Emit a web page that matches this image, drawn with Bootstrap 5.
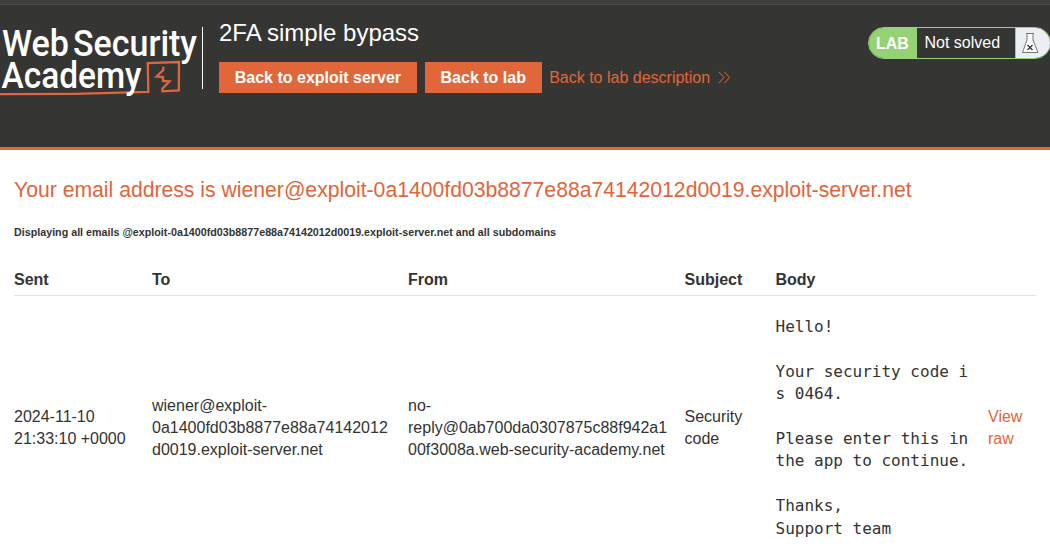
<!DOCTYPE html>
<html lang="en">
<head>
<meta charset="utf-8">
<title>2FA simple bypass</title>
<link rel="stylesheet" href="https://cdn.jsdelivr.net/npm/bootstrap@5.3.0/dist/css/bootstrap.min.css">
<style>
body{font-family:"Liberation Sans",Arial,sans-serif;font-size:16px;line-height:22px;color:#333332;overflow:hidden}
a{color:#e0673a;text-decoration:none}
.topstrip{height:5px;background:#3f3f3f;border-bottom:1px solid #4d4d4c}
.lab-header{height:145px;background:#353533;border-bottom:3px solid #e1653a}
.brand-logo{width:202px;height:90px;margin-top:14px;overflow:visible}
.brand-logo text{font-family:Roboto,sans-serif;font-weight:500;font-size:37.5px;fill:#fff}
.divider{width:1px;height:62px;margin-top:22px;background:#fff}
.title-block{margin:12px 0 0 16px}
.title-block h2{font-size:24px;line-height:32px;margin-bottom:13px;color:#fff;font-weight:400}
.btn-lab{height:31px;padding:0 15.75px;border:0;border-radius:0;background:#e1673a;color:#fff;font-weight:700;line-height:31px}
.btn-lab:hover{background:#c9552b;color:#fff}
.lab-link{margin-left:-.5px}
.lab-status{width:183px;height:32px;margin:22px -1px 0 0;border:1px solid #95d175;border-radius:16px;color:#fff;line-height:30px}
.lab-label{width:48px;background:#95d175;font-weight:700;padding:1px 0 0 7px}
.lab-text{width:99px;padding-left:7.5px;border-right:1px solid #95d175}
.lab-flask{background:#ebeef2}
.mail-area{padding:0 14px}
.mail-area h1{font-size:21.18px;line-height:26px;margin:27px 0 0;color:#e1653a;font-weight:400}
.mail-area h6{font-size:10.72px;line-height:14px;margin:22px 0 30px;font-weight:700}
.mail-table{table-layout:fixed;width:1022px;margin:0;color:#333332;--bs-table-color:#333332;--bs-table-bg:transparent}
.mail-table>:not(caption)>*>*{padding:0 20px 0 0;border:0}
.mail-table thead th{height:26px;border-bottom:1px solid #e2e2e2!important;vertical-align:top}
.mail-body{padding:20.5px 0}
.mail-table pre{font:16px/22.4px "DejaVu Sans Mono",monospace;margin:0;color:#333332;white-space:pre-wrap;word-break:break-all;width:193px}
</style>
</head>
<body>
<div class="topstrip"></div>
<header class="lab-header d-flex align-items-start">
  <svg class="brand-logo flex-shrink-0" viewBox="0 19 202 90">
    <text x="2" y="55.5" textLength="67" lengthAdjust="spacingAndGlyphs">Web</text>
    <text x="73" y="55.5" textLength="124" lengthAdjust="spacingAndGlyphs">Security</text>
    <path d="M0 94.2L75 93.8L148.3 92L147.8 63L179 62L178.8 90.5L162.5 91.3V88.5L169.5 81.500L163 81V77L156.5 76.5L163.3 70V66.5" fill="none" stroke="#e1653a" stroke-width="2.3"/>
    <text x="1.5" y="88" textLength="140" lengthAdjust="spacingAndGlyphs">Academy</text>
  </svg>
  <div class="divider"></div>
  <div class="title-block flex-grow-1">
    <h2>2FA simple bypass</h2>
    <div class="d-flex align-items-center gap-2">
      <a class="btn btn-lab" href="#">Back to exploit server</a>
      <a class="btn btn-lab" href="#">Back to lab</a>
      <a class="lab-link d-flex align-items-center" href="#">Back to lab description
        <svg class="ms-2" width="13" height="13" viewBox="0 0 13 13" fill="none" stroke="currentColor" stroke-width="1"><path d="M.8.8L6 6.5L.8 12.2M6.3.8L11.5 6.5L6.3 12.2"/></svg></a>
    </div>
  </div>
  <div class="lab-status d-flex flex-shrink-0 overflow-hidden">
    <span class="lab-label">LAB</span><span class="lab-text">Not solved</span>
    <span class="lab-flask flex-grow-1 d-flex align-items-center"><svg class="ms-1" width="20" height="22" viewBox="0 0 20 22" fill="#fff" stroke="#777" stroke-width="1"><path d="M7 1.5V8L2.500 20.500H18L13 8V1.5M6 1.5H14"/><path d="M7.500 13L12.500 18M12.500 13L7.500 18" stroke="#333" stroke-width="1.3"/></svg></span>
  </div>
</header>
<main class="mail-area">
  <h1>Your email address is wiener@exploit-0a1400fd03b8877e88a74142012d0019.exploit-server.net</h1>
  <h6>Displaying all emails @exploit-0a1400fd03b8877e88a74142012d0019.exploit-server.net and all subdomains</h6>
  <table class="table mail-table align-middle">
    <colgroup><col style="width:138px"><col style="width:256px"><col style="width:276.5px"><col style="width:91px"><col style="width:212.5px"><col></colgroup>
    <thead><tr><th>Sent</th><th>To</th><th>From</th><th>Subject</th><th>Body</th><th></th></tr></thead>
    <tbody><tr>
      <td class="text-nowrap">2024-11-10<br>21:33:10 +0000</td>
      <td class="text-nowrap">wiener@exploit-<br>0a1400fd03b8877e88a74142012<br>d0019.exploit-server.net</td>
      <td class="text-nowrap">no-<br>reply@0ab700da0307875c88f942a1<br>00f3008a.web-security-academy.net</td>
      <td>Security<br>code</td>
      <td><div class="mail-body"><pre>Hello!

Your security code i
s 0464.

Please enter this in
the app to continue.

Thanks,
Support team</pre></div></td>
      <td class="pe-0"><a href="#">View<br>raw</a></td>
    </tr></tbody>
  </table>
</main>
<script src="https://cdn.jsdelivr.net/npm/bootstrap@5.3.0/dist/js/bootstrap.bundle.min.js"></script>
</body>
</html>
